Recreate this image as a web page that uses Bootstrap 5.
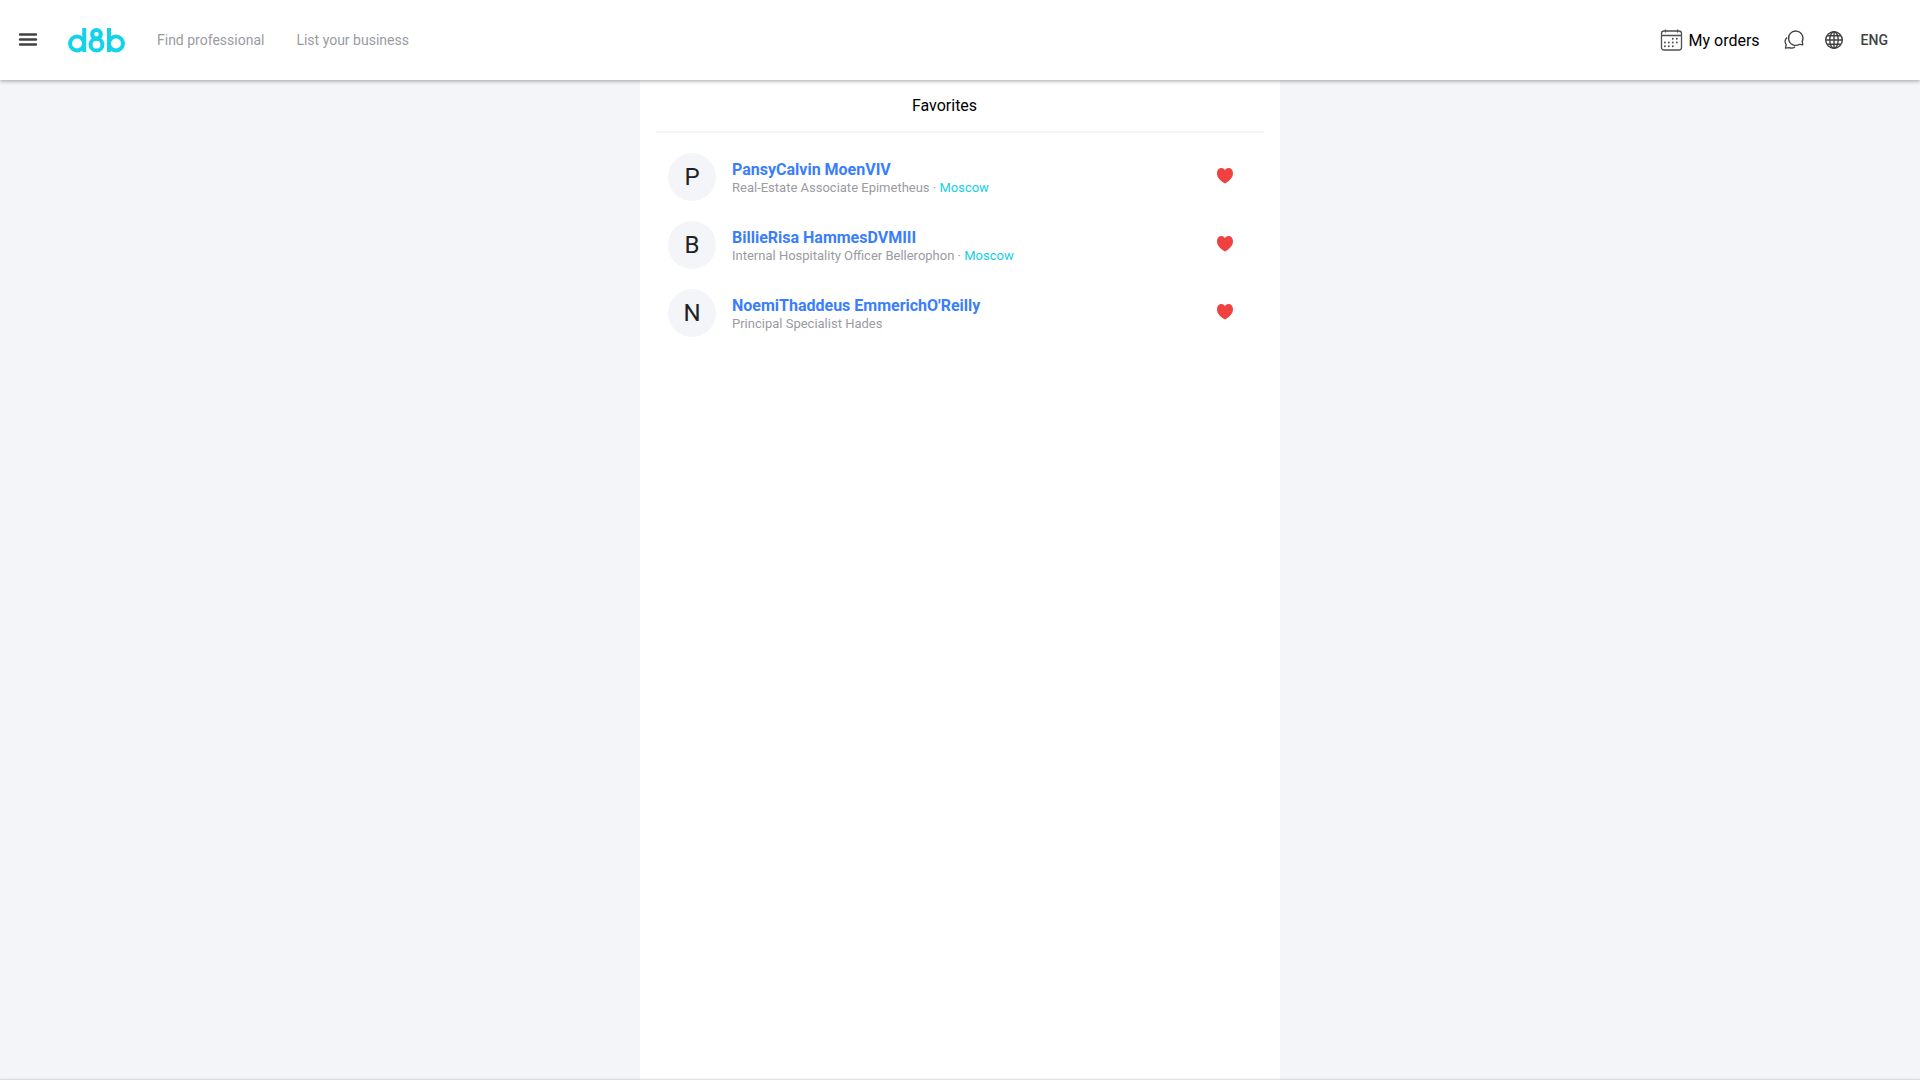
<!DOCTYPE html>
<html lang="en">
<head>
<meta charset="utf-8">
<meta name="viewport" content="width=device-width, initial-scale=1">
<title>Favorites</title>
<link href="https://cdn.jsdelivr.net/npm/bootstrap@5.3.0/dist/css/bootstrap.min.css" rel="stylesheet">
<style>
body { font-family: Roboto, "Liberation Sans", sans-serif; background: #f3f5f9; color: #212121; }
a { text-decoration: none; }
svg { display: block; }
.top-bar { height: 80px; background: #fff; padding: 0 32px 0 16px; box-shadow: 0 1px 4px rgba(0,0,0,.36); z-index: 2; }
.menu-btn { width: 24px; height: 24px; }
.brand-link { margin: 0 32px 0 28px; }
.top-link { font-size: 14px; line-height: 20px; color: #9a9ba3; }
.orders-link { font-size: 16px; line-height: 24px; color: #000; gap: 5px; margin-right: 22px; }
.orders-link span, .person-text { padding-top: 2px; }
.lang-btn { font-size: 14px; line-height: 20px; font-weight: 500; color: #424242; margin-left: 18px; gap: 17px; }
.panel { width: 100%; max-width: 640px; background: #fff; }
.panel-head { height: 53px; border-bottom: 2px solid #f3f5f9; padding-right: 31px; }
.panel-title { font-size: 16px; line-height: 24px; font-weight: 400; color: #000; }
.people { padding-top: 10px; }
.person { padding: 10px 30px 10px 12px; }
.avatar { width: 48px; height: 48px; background: #f3f5f9; font-size: 24px; line-height: 24px; }
.person-name { font-size: 16px; line-height: 20px; font-weight: 700; color: #3a7efc; }
.person-job { font-size: 13px; line-height: 16px; color: #9a9ba3; }
.fav-btn { padding: 0 0 2px; }
.city { color: #13cfe6; }
.bottom-edge { height: 0; box-shadow: 0 0 2px 1px rgba(0,0,0,.15); }
</style>
<script src="https://cdn.jsdelivr.net/npm/bootstrap@5.3.0/dist/js/bootstrap.bundle.min.js"></script>
</head>
<body class="d-flex flex-column min-vh-100">
<header class="top-bar d-flex align-items-center position-relative">
  <button class="menu-btn btn p-0 border-0" type="button" aria-label="Menu">
    <svg width="24" height="24" viewBox="0 0 24 24" stroke="#424242" stroke-width="2.4" stroke-linecap="round"><path d="M4 6.500h16M4 11.500h16M4 16.500h16"/></svg>
  </button>
  <a class="brand-link" href="#" aria-label="d8b">
    <svg width="57" height="26" viewBox="0 0 57 26" fill="none" stroke="#13d3ea" stroke-width="4">
      <circle cx="9" cy="16.500" r="7"/><line x1="16.200" y1="1" x2="16.200" y2="25"/>
      <circle cx="28.500" cy="7.200" r="4.300"/><circle cx="28.500" cy="17.700" r="5.900"/>
      <line x1="41" y1="1" x2="41" y2="25"/><circle cx="48" cy="16.500" r="7"/>
    </svg>
  </a>
  <nav class="d-flex gap-4 me-auto" aria-label="Main">
    <a class="top-link me-2" href="#">Find professional</a>
    <a class="top-link" href="#">List your business</a>
  </nav>
  <a class="orders-link d-flex align-items-center" href="#">
    <svg width="24" height="24" viewBox="0 0 24 24" fill="none" stroke="#505050" stroke-width="1.300"><rect x="1.500" y="3" width="20" height="19" rx="2.500"/><path d="M1.500 7.500h20M5.500 1.500v3M17.500 1.500v3"/><path stroke-width="1.900" stroke-linecap="round" d="M12.800 10.700h.01M16.800 10.700h.01M4.900 14.500h.01M8.800 14.500h.01M12.800 14.500h.01M16.800 14.500h.01M4.900 18.300h.01M8.800 18.300h.01M12.800 18.300h.01"/></svg>
    <span>My orders</span>
  </a>
  <a href="#" aria-label="Messages">
    <svg width="24" height="24" viewBox="0 0 24 24" fill="none" stroke="#424242" stroke-width="1.300" stroke-linejoin="round"><path d="M17.600 16.300A7.200 7.200 0 1 1 20.200 13.400L20.800 16.800Z"/><path d="M5 9.500c-2 2-2.300 5-.8 7.200L3.500 20.200l3.800-.5c2 .8 4.200.4 5.700-1"/></svg>
  </a>
  <button class="lang-btn btn border-0 p-0 d-flex align-items-center" type="button">
    <svg width="20" height="20" viewBox="0 0 20 20" fill="none" stroke="#424242" stroke-width="1.400"><circle cx="10" cy="10" r="8.300"/><ellipse cx="10" cy="10" rx="4.200" ry="8.300"/><path d="M10 1.700v16.600M1.700 10h16.600M2.900 5.800h14.200M2.900 14.200h14.200"/></svg>
    ENG
  </button>
</header>
<main class="panel flex-grow-1 mx-auto px-3">
  <div class="panel-head d-flex align-items-center justify-content-center"><h1 class="panel-title mb-0">Favorites</h1></div>
  <ul class="people list-unstyled mb-0">
    <li class="person d-flex align-items-center">
      <div class="avatar rounded-circle d-flex align-items-center justify-content-center me-3">P</div>
      <div class="person-text me-auto"><a class="person-name d-block" href="#">PansyCalvin MoenVIV</a><div class="person-job">Real-Estate Associate Epimetheus · <span class="city">Moscow</span></div></div>
      <button class="fav-btn btn border-0" type="button" aria-label="Remove from favorites"><svg width="18" height="20" viewBox="0 0 18 20" fill="#f04141"><path d="M9 17.500C4.500 15 1 11.800 1 7.300 1 4.200 2.900 2 5.300 2 7 2 8.300 2.900 9 4.200 9.700 2.900 11 2 12.700 2 15.100 2 17 4.200 17 7.300c0 4.500-3.500 7.700-8 10.200Z"/></svg></button>
    </li>
    <li class="person d-flex align-items-center">
      <div class="avatar rounded-circle d-flex align-items-center justify-content-center me-3">B</div>
      <div class="person-text me-auto"><a class="person-name d-block" href="#">BillieRisa HammesDVMIII</a><div class="person-job">Internal Hospitality Officer Bellerophon · <span class="city">Moscow</span></div></div>
      <button class="fav-btn btn border-0" type="button" aria-label="Remove from favorites"><svg width="18" height="20" viewBox="0 0 18 20" fill="#f04141"><path d="M9 17.500C4.500 15 1 11.800 1 7.300 1 4.200 2.900 2 5.300 2 7 2 8.300 2.900 9 4.200 9.700 2.900 11 2 12.700 2 15.100 2 17 4.200 17 7.300c0 4.500-3.500 7.700-8 10.200Z"/></svg></button>
    </li>
    <li class="person d-flex align-items-center">
      <div class="avatar rounded-circle d-flex align-items-center justify-content-center me-3">N</div>
      <div class="person-text me-auto"><a class="person-name d-block" href="#">NoemiThaddeus EmmerichO'Reilly</a><div class="person-job">Principal Specialist Hades</div></div>
      <button class="fav-btn btn border-0" type="button" aria-label="Remove from favorites"><svg width="18" height="20" viewBox="0 0 18 20" fill="#f04141"><path d="M9 17.500C4.500 15 1 11.800 1 7.300 1 4.200 2.900 2 5.300 2 7 2 8.300 2.900 9 4.200 9.700 2.900 11 2 12.700 2 15.100 2 17 4.200 17 7.300c0 4.500-3.500 7.700-8 10.200Z"/></svg></button>
    </li>
  </ul>
</main>
<div class="bottom-edge"></div>
</body>
</html>
